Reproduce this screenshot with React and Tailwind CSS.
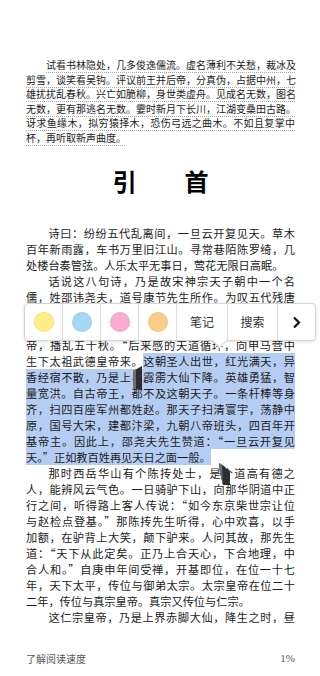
import React from 'react'

const preface = [
  '试看书林隐处，几多俊逸儒流。虚名薄利不关愁，裁冰及',
  '剪雪，谈笑看吴钩。评议前王并后帝，分真伪，占据中州，七',
  '雄扰扰乱春秋。兴亡如脆柳，身世类虚舟。见成名无数，图名',
  '无数，更有那逃名无数。霎时新月下长川，江湖变桑田古路。',
  '讶求鱼缘木，拟穷猿择木，恐伤弓远之曲木。不如且复掌中',
  '杯，再听取新声曲度。',
]

// each line: [before, selected, hidden]
const paragraphs = [
  [
    ['诗曰：纷纷五代乱离间，一旦云开复见天。草木'],
    ['百年新雨露，车书万里旧江山。寻常巷陌陈罗绮，几'],
    ['处楼台奏管弦。人乐太平无事日，莺花无限日高眠。'],
  ],
  [
    ['话说这八句诗，乃是故宋神宗天子朝中一个名'],
    ['儒，姓邵讳尧夫，道号康节先生所作。为叹五代残唐'],
    ['天下干戈不息，那时朝属梁，暮属晋，正谓是：朱李', '', true],
    ['石刘郭，梁唐晋汉周，都来一十五年之间，四方扰', '', true],
    ['帝，播乱五十秋。“后来感的天道循环，向甲马营中'],
    ['生下太祖武德皇帝来。', '这朝圣人出世，红光满天，异'],
    ['', '香经宿不散，乃是上界霹雳大仙下降。英雄勇猛，智'],
    ['', '量宽洪。自古帝王，都不及这朝天子。一条杆棒等身'],
    ['', '齐，扫四百座军州都姓赵。那天子扫清寰宇，荡静中'],
    ['', '原，国号大宋，建都汴梁，九朝八帝班头，四百年开'],
    ['', '基帝主。因此上，邵尧夫先生赞道：“一旦云开复见'],
    ['', '天。”正如教百姓再见天日之面一般。'],
  ],
  [
    ['那时西岳华山有个陈抟处士，是个道高有德之'],
    ['人，能辨风云气色。一日骑驴下山，向那华阴道中正'],
    ['行之间，听得路上客人传说：“如今东京柴世宗让位'],
    ['与赵检点登基。”那陈抟先生听得，心中欢喜，以手'],
    ['加额，在驴背上大笑，颠下驴来。人问其故，那先生'],
    ['道：“天下从此定矣。正乃上合天心，下合地理，中'],
    ['合人和。”自庚申年间受禅，开基即位，在位一十七'],
    ['年，天下太平，传位与御弟太宗。太宗皇帝在位二十'],
    ['二年，传位与真宗皇帝。真宗又传位与仁宗。'],
  ],
  [['这仁宗皇帝，乃是上界赤脚大仙，降生之时，昼']],
]

const swatches = ['#fcef86', '#a3d8f2', '#f9abd0', '#fbcd8a']

function Line({ parts, first, last }) {
  const [before, selected, hidden] = parts
  return (
    <div
      className={`h-[16px] leading-[16px] whitespace-nowrap ${first ? 'pl-[2em]' : ''} ${
        last ? 'text-left' : 'text-justify [text-align-last:justify]'
      } ${hidden ? 'invisible' : ''}`}
    >
      {before}
      {selected && <span className="bg-[#b6cdf3]">{selected}</span>}
    </div>
  )
}

export default function App() {
  return (
    <div
      lang="zh-CN"
      className="relative w-[320px] h-[676px] overflow-hidden bg-white text-[#1c1c1c] font-['Noto_Sans_CJK_SC',sans-serif]"
    >
      <div className="pl-[26px] pt-[58px] w-[295px]">
        {/* preface, dotted underline */}
        <div className="text-[10px]">
          {preface.map((l, i) => (
            <div
              key={i}
              className={`h-[14.5px] leading-[14.5px] whitespace-nowrap ${i === 0 ? 'pl-[2em]' : ''} ${
                i === preface.length - 1 ? 'text-left' : 'text-justify [text-align-last:justify]'
              }`}
            >
              <span className="underline decoration-dotted decoration-[#aaaaaa] underline-offset-[3px]">
                {l}
              </span>
            </div>
          ))}
        </div>

        <h1 className="mt-[24px] h-[24px] leading-[24px] text-center text-[24px] font-bold text-black">
          引　　首
        </h1>

        <div className="mt-[32px] text-[11.2px]">
          {paragraphs.map((p, pi) =>
            p.map((parts, li) => (
              <Line
                key={`${pi}-${li}`}
                parts={parts}
                first={li === 0}
                last={li === p.length - 1 && pi !== paragraphs.length - 1}
              />
            ))
          )}
        </div>

        <div className="mt-[25px] flex justify-between items-center h-[16px] text-[10px] text-[#555]">
          <span>了解阅读速度</span>
          <span className="font-['Liberation_Serif',serif] text-[11px]">1%</span>
        </div>
      </div>

      {/* selection handles */}
      <svg className="absolute left-[131px] top-[366px]" width="12" height="23" viewBox="0 0 12 23">
        <polygon points="2,5 11,0 11,23 2,23" fill="#2e2e2e" />
        <polygon points="2,5 5,3.3 5,23 2,23" fill="#6d6d6d" />
      </svg>
      <svg className="absolute left-[218px] top-[463px]" width="13" height="22" viewBox="0 0 13 22">
        <polygon points="1,0 6,3 12,9 12,22 5,22 2,10" fill="#2e2e2e" />
        <polygon points="1,0 4,2 5,22 2,10" fill="#6d6d6d" />
      </svg>

      {/* context menu */}
      <div className="absolute left-[24px] top-[303px] w-[292px] h-[38px] bg-white border border-[#d6d6d6] rounded-[4px] shadow-[0_1px_3px_rgba(0,0,0,0.12)]">
        <div className="absolute left-[189px] -bottom-[6px] w-[11px] h-[11px] rotate-45 bg-white border-r border-b border-[#d6d6d6]" />
        <div className="relative flex h-full divide-x divide-[#dcdcdc]">
          {swatches.map((c) => (
            <div key={c} className="w-[38px] flex items-center justify-center">
              <span
                className="block w-[20px] h-[20px] rounded-full border border-black/5"
                style={{ backgroundColor: c }}
              />
            </div>
          ))}
          <div className="w-[51px] flex items-center justify-center text-[12px] text-[#333]">笔记</div>
          <div className="w-[50px] flex items-center justify-center text-[12px] text-[#333]">搜索</div>
          <div className="flex-1 flex items-center justify-center">
            <svg width="9" height="13" viewBox="0 0 9 13">
              <path d="M2 1.5 L7 6.5 L2 11.5" fill="none" stroke="#111" strokeWidth="2.2" />
            </svg>
          </div>
        </div>
      </div>
    </div>
  )
}
